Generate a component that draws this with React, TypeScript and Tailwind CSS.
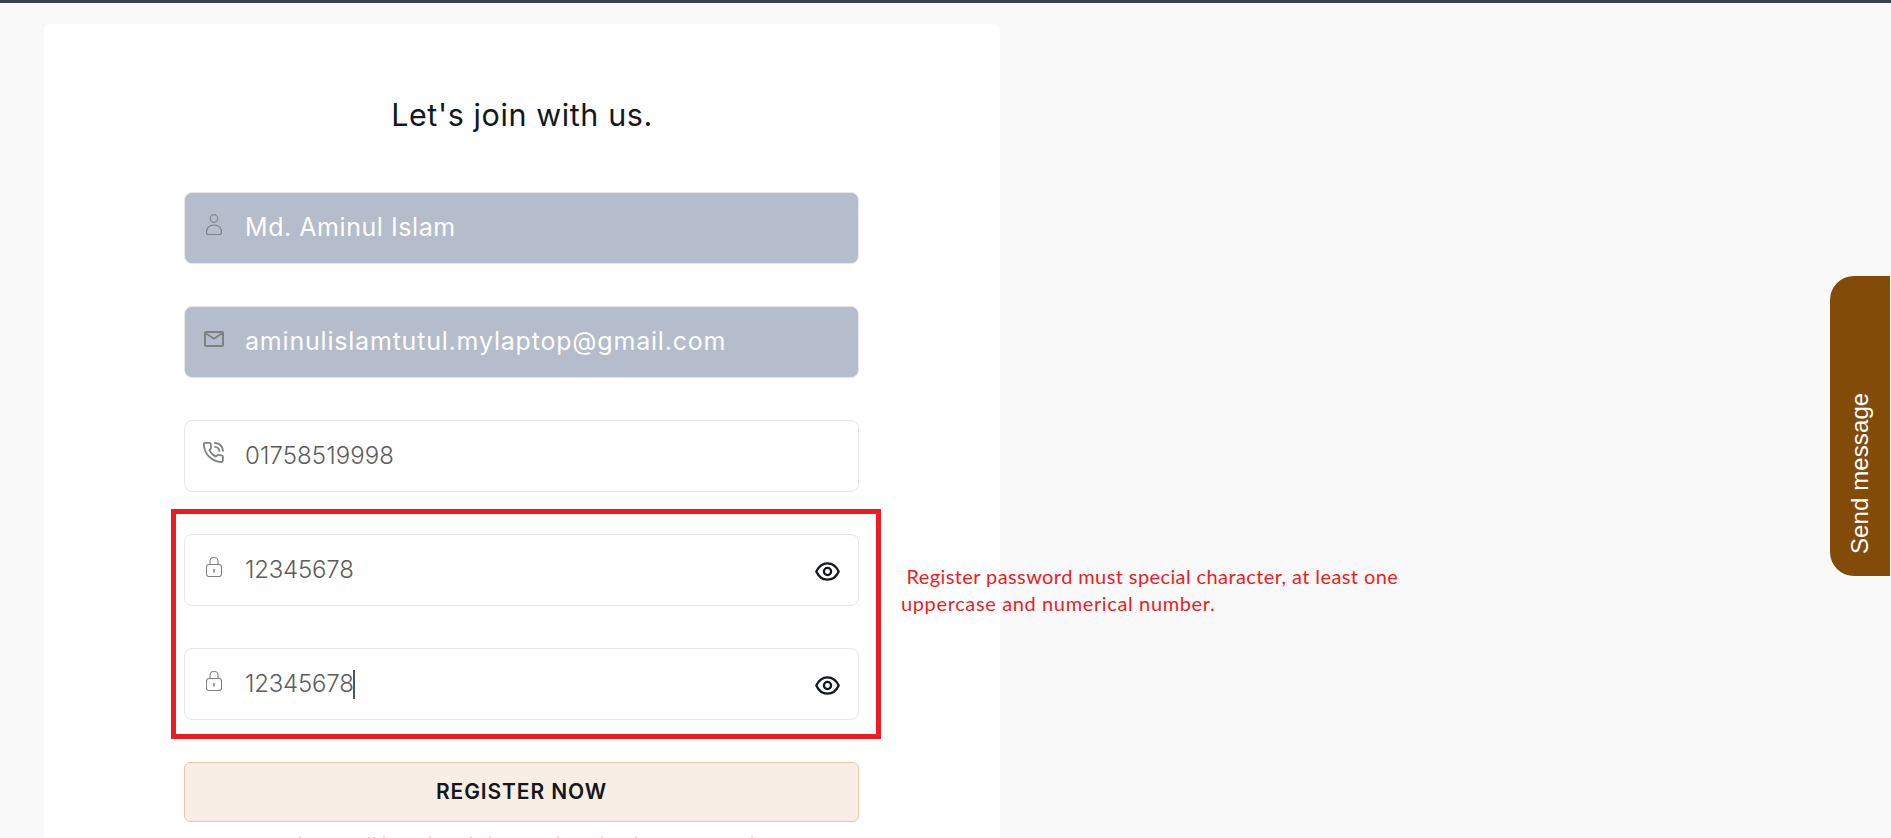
import type { ReactNode } from "react";

function UserIcon() {
  return (
    <svg width="16" height="21" viewBox="0 0 16 21" fill="none" stroke="#7e8082" strokeWidth="1.100">
      <circle cx="8" cy="4.5" r="3.8" />
      <path d="M.5 18.2C.5 13.8 3.5 11 8 11s7.500 2.800 7.500 7.200c0 1.500-.8 2.300-2.300 2.300H2.800C1.300 20.500.5 19.700.5 18.200Z" />
    </svg>
  );
}

function MailIcon() {
  return (
    <svg width="20" height="16" viewBox="0 0 20 16" fill="none" stroke="#7e8082" strokeWidth="2" strokeLinejoin="round">
      <rect x="1" y="1" width="18" height="14" rx="1" />
      <path d="m1.500 2 8.500 5.800L18.500 2" strokeWidth="1.700" />
    </svg>
  );
}

function PhoneIcon() {
  return (
    <svg className="-ml-0.5" width="21" height="21" viewBox="0 0 21 21" fill="none" stroke="#7e8082" strokeWidth="1.800" strokeLinecap="round" strokeLinejoin="round">
      <path d="M1.800.9h4.400c.8 0 1.400.5 1.500 1.300l.4 3.200c.1.600-.1 1-.5 1.400L6.300 8.200c1.500 2.900 3.600 5 6.500 6.400l1.400-1.300c.4-.4.900-.6 1.400-.5l3 .5c.8.100 1.300.7 1.300 1.500v3.800c0 .9-.6 1.500-1.500 1.500C9 19.800 1.100 11.800.9 2.400.9 1.500 1.200.9 1.800.9Z" />
      <path d="M12 1c4.500.3 7.500 3.200 8 7.800M12 4.800c2.500.3 4 1.600 4.400 4" />
    </svg>
  );
}

function LockIcon() {
  return (
    <svg width="16" height="20" viewBox="0 0 16 20" fill="none" stroke="#7e8082" strokeWidth="1.100">
      <rect x=".5" y="7.500" width="15" height="12" rx="2.500" />
      <path d="M4 7.500V4.300a4 4 0 0 1 8 0v3.200" />
      <path d="M8 12v3.500" strokeWidth="1.500" />
    </svg>
  );
}

function EyeIcon() {
  return (
    <svg className="mt-0.5" width="25" height="19" viewBox="0 0 25 19" fill="none" stroke="#12181b" strokeWidth="2.300">
      <path d="M1.300 9.500C3.800 4 7.700 1.300 12.500 1.300S21.200 4 23.700 9.500c-2.500 5.500-6.400 8.200-11.200 8.200S3.800 15 1.300 9.500Z" strokeLinejoin="round" />
      <circle cx="12.500" cy="9.500" r="3.600" />
    </svg>
  );
}

function Field({ icon, filled, reveal, children }: { icon: ReactNode; filled?: boolean; reveal?: boolean; children: ReactNode }) {
  return (
    <div className={`flex h-[72px] items-center rounded-lg border border-[#e7e7e7] pr-[18px] pl-[18px] text-2xl ${filled ? "bg-[#b5bccb] text-white" : "bg-white text-[#5c5c5c]"}`}>
      <span className="mb-[7px] flex w-[22px] shrink-0 justify-center">{icon}</span>
      <span className="ml-5 flex flex-1 items-center whitespace-nowrap">{children}</span>
      {reveal && <EyeIcon />}
    </div>
  );
}

const markOffsets = [299, 368, 373, 383, 429, 470, 489, 557, 601, 635, 751];

export default function App() {
  return (
    <div className="relative h-[838px] overflow-hidden border-t-[3px] border-[#3a4151] bg-[#f9f9f9] font-['Inter','Liberation_Sans',sans-serif]">
      <main className="mt-[21px] ml-11 h-[814px] w-[956px] rounded-t-md bg-white px-[140px] pt-[73px]">
        <h1 className="h-[95px] text-center text-[30.500px] leading-9 text-[#12181b]">
          <span className="tracking-[0.6px]">Let's join with us.</span>
        </h1>
        <form className="mr-px flex flex-col gap-[42px]">
          <Field icon={<UserIcon />} filled><span className="text-[25px] tracking-[0.55px]">Md. Aminul Islam</span></Field>
          <Field icon={<MailIcon />} filled><span className="text-[25px] tracking-[0.8px]">aminulislamtutul.mylaptop@gmail.com</span></Field>
          <Field icon={<PhoneIcon />}><span className="font-light tracking-[0.1px]">01758519998</span></Field>
          <Field icon={<LockIcon />} reveal><span className="font-light tracking-[-0.2px]">12345678</span></Field>
          <Field icon={<LockIcon />} reveal>
            <span className="font-light tracking-[-0.2px]">12345678</span>
            <span className="-ml-px h-[29px] w-0.5 bg-[#555]" />
          </Field>
          <button type="button" className="h-[60px] rounded-md border border-[#e6cbab] bg-[#f8eee5] text-[21px] font-semibold tracking-[0.9px] text-[#12181b]">
            REGISTER NOW
          </button>
        </form>
      </main>
      <svg className="absolute bottom-0 left-0" width="860" height="1" viewBox="0 0 860 1" fill="#e3c6cd">
        {markOffsets.map((x) => <rect key={x} x={x} y="0" width="2" height="1" />)}
      </svg>
      <div className="absolute top-[506px] left-[171px] h-[230px] w-[710px] border-[5px] border-[#ed1c24]" />
      <p className="absolute top-[560px] left-[901px] font-['Lato',sans-serif] text-[20px] leading-[27px] whitespace-pre text-[#ed1c24]">
        <span className="block tracking-[0.4px]"> Register password must special character, at least one</span>
        <span className="block tracking-[0.63px]">uppercase and numerical number.</span>
      </p>
      <button type="button" className="absolute top-[273px] left-[1830px] flex h-[300px] w-[60px] rotate-180 items-center justify-start rounded-r-3xl bg-[#824b08] pt-[22px] font-['Liberation_Sans',sans-serif] text-2xl tracking-[0.1px] text-white [writing-mode:vertical-rl]">
        Send message
      </button>
    </div>
  );
}
